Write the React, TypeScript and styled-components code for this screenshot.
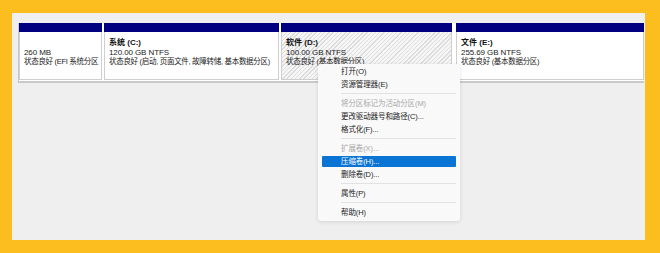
import React from "react";
import styled, { createGlobalStyle } from "styled-components";

const GlobalStyle = createGlobalStyle`
  html, body {
    margin: 0;
    padding: 0;
    background: #fcbe1f;
  }
  body {
    font-family: "Liberation Sans", "Noto Sans CJK SC", sans-serif;
  }
`;

type Partition = {
  width: number;
  title?: string;
  size: string;
  status: string;
  selected?: boolean;
};

const partitions: Partition[] = [
  { width: 83, size: "260 MB", status: "状态良好 (EFI 系统分区" },
  { width: 176, title: "系统 (C:)", size: "120.00 GB NTFS", status: "状态良好 (启动, 页面文件, 故障转储, 基本数据分区)" },
  { width: 172, title: "软件 (D:)", size: "100.00 GB NTFS", status: "状态良好 (基本数据分区)", selected: true },
  { width: 189, title: "文件 (E:)", size: "255.69 GB NTFS", status: "状态良好 (基本数据分区)" },
];

type MenuEntry = { label: string; disabled?: boolean; active?: boolean } | "sep";

const menu: MenuEntry[] = [
  { label: "打开(O)" },
  { label: "资源管理器(E)" },
  "sep",
  { label: "将分区标记为活动分区(M)", disabled: true },
  { label: "更改驱动器号和路径(C)..." },
  { label: "格式化(F)..." },
  "sep",
  { label: "扩展卷(X)...", disabled: true },
  { label: "压缩卷(H)...", active: true },
  { label: "删除卷(D)..." },
  "sep",
  { label: "属性(P)" },
  "sep",
  { label: "帮助(H)" },
];

const App: React.FC = () => {
  return (
    <Page>
      <GlobalStyle />
      <Panel>
        <DiskRow>
          {partitions.map((p, i) => (
            <Volume key={i} $width={p.width} $last={i === partitions.length - 1}>
              <VolumeHeader />
              <VolumeBody $selected={p.selected}>
                {p.title ? <VolumeTitle>{p.title}</VolumeTitle> : <Spacer />}
                <Line>{p.size}</Line>
                <Status>{p.status}</Status>
              </VolumeBody>
            </Volume>
          ))}
        </DiskRow>

        <Menu>
          {menu.map((m, i) =>
            m === "sep" ? (
              <Separator key={i} />
            ) : (
              <MenuItem key={i} $disabled={m.disabled} $active={m.active}>
                {m.label}
              </MenuItem>
            )
          )}
        </Menu>
      </Panel>
    </Page>
  );
};

export default App;

const Page = styled.div`
  width: 660px;
  height: 253px;
  padding: 13px 15px 13px 12px;
  box-sizing: border-box;
`;

const Panel = styled.div`
  position: relative;
  width: 633px;
  height: 227px;
  background: #efefef;
  padding: 10px 1px 0 6px;
  box-sizing: border-box;
`;

const DiskRow = styled.div`
  display: flex;
  gap: 2px;
  background: #ffffff;
  border-left: 1px solid #c9c9c9;
  border-bottom: 2px solid #c9c9c9;
  padding-bottom: 1px;
`;

const Volume = styled.div<{ $width: number; $last?: boolean }>`
  width: ${(p) => p.$width}px;
  margin-left: ${(p) => (p.$last ? "2px" : "0")};
  display: flex;
  flex-direction: column;
`;

const VolumeHeader = styled.div`
  height: 9px;
  background: #000080;
`;

const VolumeBody = styled.div<{ $selected?: boolean }>`
  height: 41px;
  border: 1px solid #cfcfcf;
  border-top: none;
  padding: 6px 4px 0 4px;
  box-sizing: content-box;
  background: ${(p) =>
    p.$selected
      ? "repeating-linear-gradient(135deg, #dcdcdc 0px, #dcdcdc 1px, #f6f6f6 1px, #f6f6f6 3px)"
      : "#ffffff"};
  overflow: hidden;
`;

const VolumeTitle = styled.div`
  font-size: 8px;
  line-height: 9.5px;
  font-weight: bold;
  color: #111;
  white-space: nowrap;
`;

const Spacer = styled.div`
  height: 9.5px;
`;

const Line = styled.div`
  font-size: 8px;
  line-height: 9.5px;
  letter-spacing: -0.1px;
  color: #222;
  white-space: nowrap;
`;

const Status = styled(Line)`
  font-size: 7.5px;
  letter-spacing: -0.3px;
`;

const Menu = styled.div`
  position: absolute;
  left: 306px;
  top: 51px;
  width: 142px;
  height: 157px;
  box-sizing: border-box;
  background: #f9f9f9;
  border-radius: 3px;
  box-shadow: 0 1px 4px rgba(0, 0, 0, 0.12);
  padding: 1px 4px 0 4px;
  display: flex;
  flex-direction: column;
`;

const MenuItem = styled.div<{ $disabled?: boolean; $active?: boolean }>`
  height: 11px;
  margin: 1px 0;
  line-height: 11px;
  padding-left: 19px;
  font-size: 7.5px;
  letter-spacing: -0.1px;
  border-radius: 1px;
  white-space: nowrap;
  color: ${(p) => (p.$active ? "#ffffff" : p.$disabled ? "#a8a8a8" : "#1a1a1a")};
  background: ${(p) => (p.$active ? "#0a74d4" : "transparent")};
`;

const Separator = styled.div`
  height: 1px;
  margin: 2px 0 3px 19px;
  background: #e2e2e2;
`;
